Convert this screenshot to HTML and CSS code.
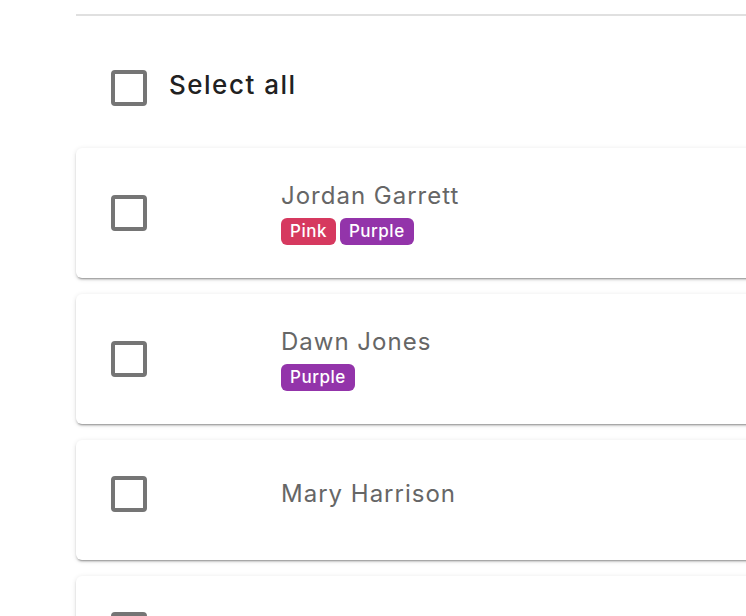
FILE: index.html
```html
<!DOCTYPE html>
<html lang="en">
<head>
<meta charset="utf-8">
<title>Contacts</title>
<link rel="stylesheet" href="styles.css">
</head>
<body>
<main class="page">
  <div class="divider"></div>
  <div class="toolbar">
    <span class="checkbox"></span>
    <span class="toolbar__label">Select all</span>
  </div>
  <ul class="list">
    <li class="card">
      <span class="checkbox"></span>
      <div class="card__body">
        <div class="card__name">Jordan Garrett</div>
        <div class="tags">
          <span class="tag tag--pink">Pink</span>
          <span class="tag tag--purple">Purple</span>
        </div>
      </div>
    </li>
    <li class="card">
      <span class="checkbox"></span>
      <div class="card__body">
        <div class="card__name">Dawn Jones</div>
        <div class="tags">
          <span class="tag tag--purple">Purple</span>
        </div>
      </div>
    </li>
    <li class="card card--plain">
      <span class="checkbox"></span>
      <div class="card__body">
        <div class="card__name">Mary Harrison</div>
      </div>
    </li>
    <li class="card card--plain">
      <span class="checkbox"></span>
      <div class="card__body">
        <div class="card__name">Keith Lawson</div>
      </div>
    </li>
  </ul>
</main>
</body>
</html>
```

FILE: styles.css
```css
html, body {
  margin: 0;
  padding: 0;
  background: #ffffff;
  overflow: hidden;
}

body {
  font-family: Inter, "Open Sans", Roboto, sans-serif;
  color: #212121;
}

.page {
  padding: 14px 0 0 76px;
}

.divider {
  height: 2px;
  background: #e0e0e0;
  margin-right: -20px;
}

.toolbar {
  display: flex;
  align-items: flex-start;
  gap: 22px;
  padding: 54px 0 0 35px;
}

.toolbar__label {
  font-size: 26px;
  font-weight: 500;
  letter-spacing: 1.5px;
  color: #212121;
  line-height: 36px;
  margin-top: -3px;
}

.checkbox {
  flex: none;
  box-sizing: border-box;
  width: 36px;
  height: 36px;
  border: 4px solid #757575;
  border-radius: 4px;
  background: #fff;
}

.list {
  list-style: none;
  margin: 42px -20px 0 0;
  padding: 0;
}

.card {
  display: flex;
  align-items: center;
  gap: 134px;
  padding: 32px 0 33px 35px;
  margin-bottom: 16px;
  background: #fff;
  border-radius: 6px;
  box-shadow: 0 3px 1px -2px rgba(0, 0, 0, 0.2),
              0 2px 2px 0 rgba(0, 0, 0, 0.14),
              0 1px 5px 0 rgba(0, 0, 0, 0.12);
}

.card--plain {
  padding: 24px 0 36px 35px;
  min-height: 60px;
}

.card__body {
  display: flex;
  flex-direction: column;
}

.card__name {
  font-size: 24px;
  line-height: 32px;
  letter-spacing: 1px;
  color: #666666;
}

.tags {
  display: flex;
  gap: 4px;
  margin-top: 6px;
}

.tag {
  height: 27px;
  line-height: 27px;
  padding: 0 9px;
  border-radius: 6px;
  font-size: 17px;
  font-weight: 500;
  letter-spacing: 0.5px;
  color: #ffffff;
}

.tag--pink {
  background: #d6395f;
}

.tag--purple {
  background: #9334aa;
}
```
